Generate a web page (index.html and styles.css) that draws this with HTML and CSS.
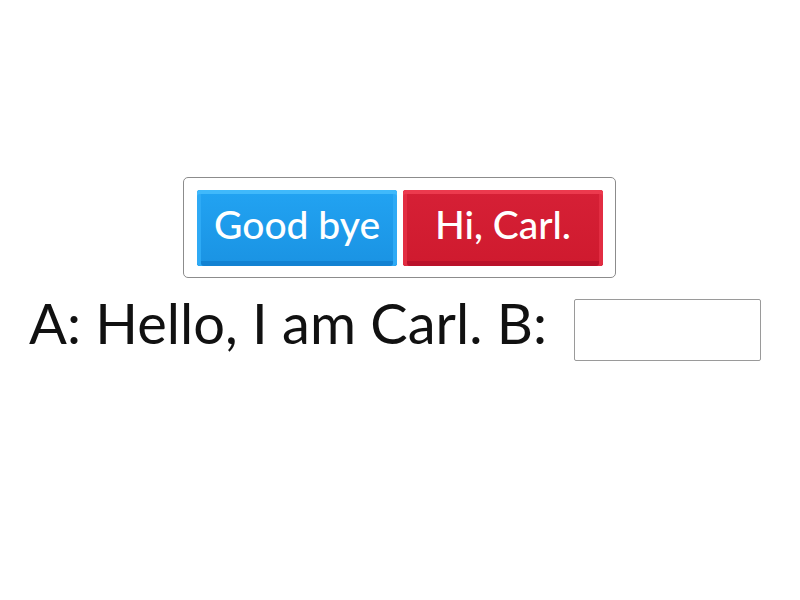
FILE: index.html
```html
<!DOCTYPE html>
<html>
<head>
<meta charset="utf-8">
<link rel="stylesheet" href="styles.css">
</head>
<body>
<div class="page">
  <div class="options">
    <div class="btn blue">Good bye</div>
    <div class="btn red">Hi, Carl.</div>
  </div>
  <div class="question">
    <span class="text">A: Hello, I am Carl. B:</span>
    <span class="blank"></span>
  </div>
</div>
</body>
</html>
```

FILE: styles.css
```css
html, body {
  margin: 0;
  padding: 0;
  background: #ffffff;
}
body {
  font-family: "Lato", "Open Sans", sans-serif;
}
.page {
  width: 800px;
  height: 600px;
  display: flex;
  flex-direction: column;
  align-items: center;
  padding-top: 177px;
  box-sizing: border-box;
}
.options {
  display: flex;
  gap: 6px;
  border: 1px solid #8c8c8c;
  border-radius: 5px;
  padding: 12px 12px 11px 13px;
  margin-left: -1px;
}
.btn {
  width: 200px;
  height: 76px;
  box-sizing: border-box;
  border-radius: 3px;
  color: #ffffff;
  font-size: 39px;
  font-weight: 500;
  display: flex;
  align-items: center;
  justify-content: center;
  padding-bottom: 8px;
}
.blue {
  background: linear-gradient(#22a3f2, #1a93e3);
  box-shadow: inset 0 4px 0 #40b9fb, inset 4px 0 0 #2eaaf5, inset -4px 0 0 #2eaaf5, inset 0 -5px 0 #1282d2;
}
.red {
  background: linear-gradient(#d62036, #cf1a2e);
  box-shadow: inset 0 4px 0 #ec3a4e, inset 4px 0 0 #e22d42, inset -4px 0 0 #e22d42, inset 0 -5px 0 #ba112a;
}
.question {
  display: flex;
  align-items: center;
  margin-top: 21px;
  margin-left: -10px;
}
.text {
  font-size: 56px;
  color: #111111;
  line-height: 62px;
  margin-top: -14px;
}
.blank {
  width: 187px;
  height: 62px;
  box-sizing: border-box;
  border: 1px solid #9a9a9a;
  border-radius: 2px;
  margin-left: 27px;
}
```
